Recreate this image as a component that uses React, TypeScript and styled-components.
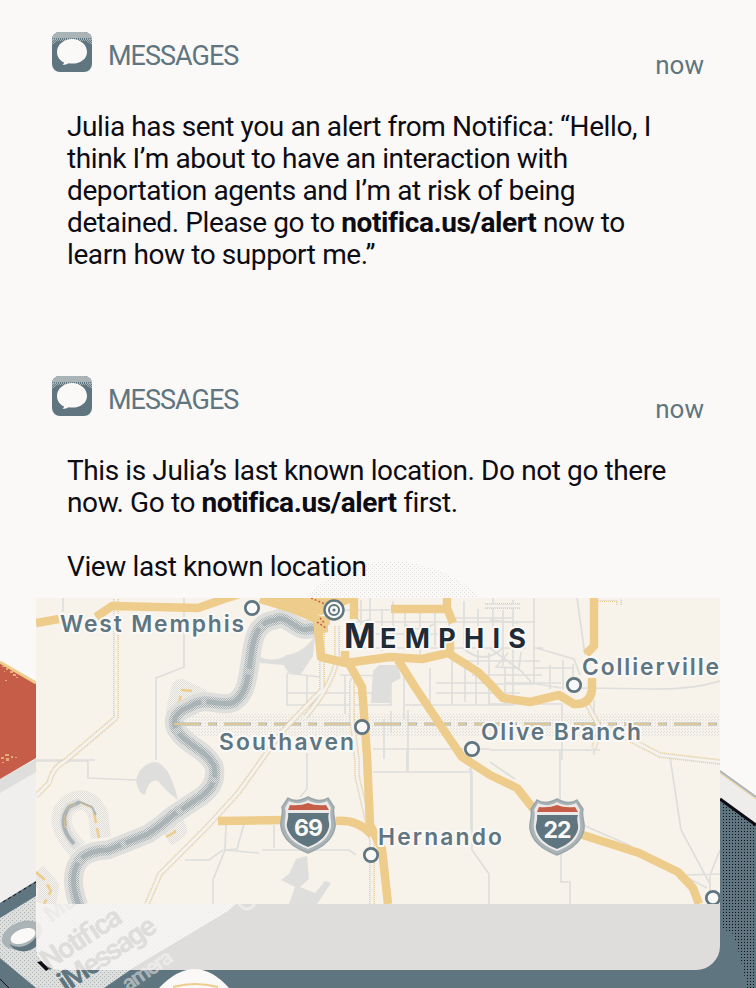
import React from 'react';
import styled, { createGlobalStyle } from 'styled-components';

const c = {
  paper: '#faf9f7', cream: '#f8f3ea', yellow: '#eecd8c', slate: '#5f7580',
  mist: '#aab4b7', light: '#dededc', red: '#c65d49', ink: '#0d0c14',
};

const Global = createGlobalStyle`
  * { box-sizing: border-box; }
  body { margin: 0; background: ${c.paper}; font-family: Roboto, "Liberation Sans", sans-serif; }
`;

const Page = styled.main`
  position: relative;
  width: 756px;
  height: 988px;
  overflow: hidden;
  background: ${c.paper};
`;

const Backdrop = styled.svg`
  position: absolute;
  inset: 0;
  display: block;
`;

const Stack = styled.div`
  position: relative;
  display: flex;
  flex-direction: column;
  gap: 32px;
  padding: 16px 36px 18px;
`;

const Card = styled.article<{ $height: number }>`
  display: flex;
  flex-direction: column;
  height: ${p => p.$height}px;
`;

const CardHeader = styled.header`
  display: flex;
  justify-content: space-between;
  height: 95px;
  padding: 16px 16px 0;
`;

const Source = styled.div`
  display: flex;
  gap: 16px;
  height: 40px;
`;

const AppIcon = styled.svg`
  width: 40px;
  height: 40px;
  border-radius: 8px;
`;

const AppName = styled.span`
  color: ${c.slate};
  font-size: 27px;
  line-height: 48px;
  letter-spacing: -0.98px;
`;

const Time = styled.time`
  margin-top: 17px;
  color: ${c.slate};
  font-size: 26px;
  line-height: 32px;
`;

const Message = styled.p`
  margin: 0;
  padding-left: 31px;
  color: ${c.ink};
  font-size: 28px;
  line-height: 32px;
`;

const Line = styled.span`
  display: block;
  min-height: 32px;
  white-space: nowrap;
  letter-spacing: -0.4px;
`;

const MapView = styled.svg`
  display: block;
  flex: none;
  width: 684px;
  height: 306px;
  margin-top: 15px;
`;

const CardFooter = styled.footer`
  flex: 1;
  border-radius: 0 0 24px 24px;
  background: rgba(250, 249, 247, 0.8);
  backdrop-filter: grayscale(1);
`;

const MapLabel = styled.text`
  fill: ${c.slate};
  stroke: ${c.paper};
  stroke-width: 4px;
  stroke-linejoin: round;
  paint-order: stroke;
  font-family: Inter, Roboto, sans-serif;
  font-size: 22.8px;
  font-weight: 600;
`;

const CityLabel = styled(MapLabel)<{ $size: number }>`
  fill: #202b36;
  font-size: ${p => p.$size}px;
  font-weight: 700;
`;

const ShieldNumber = styled.text`
  fill: ${c.paper};
  font-family: Inter, Roboto, sans-serif;
  font-size: 23px;
  font-weight: 700;
  letter-spacing: -1px;
  text-anchor: middle;
`;

const BackdropText = styled.text`
  font-family: Roboto, sans-serif;
  font-weight: 700;
`;

function PhoneLabels() {
  return (
    <g fill={c.slate}>
      <BackdropText fontSize="23" fill={c.mist} transform="translate(51 923) rotate(-36)">MES</BackdropText>
      <BackdropText fontSize="29" transform="translate(48 971) rotate(-33)" textLength="91">Notifica</BackdropText>
      <BackdropText fontSize="29" transform="translate(66 993) rotate(-34)" textLength="112">iMessage</BackdropText>
      <BackdropText fontSize="22" transform="translate(128 992) rotate(-34)" textLength="56" fill={c.mist}>amera</BackdropText>
    </g>
  );
}

function Background() {
  return (
    <Backdrop width="756" height="988" viewBox="0 0 756 988">
      <defs>
        <pattern id="shade" width="3" height="3" patternUnits="userSpaceOnUse">
          <rect width="3" height="3" fill={c.slate} /><rect width="1" height="1" fill={c.ink} />
        </pattern>
        <pattern id="paleDots" width="4" height="4" patternUnits="userSpaceOnUse">
          <rect width="1" height="1" fill={c.light} /><rect x="2" y="2" width="1" height="1" fill={c.light} />
        </pattern>
        <pattern id="phoneDots" width="4" height="4" patternUnits="userSpaceOnUse">
          <rect width="4" height="4" fill={c.light} /><rect width="1" height="1" fill={c.mist} /><rect x="2" y="2" width="1" height="1" fill={c.mist} />
        </pattern>
      </defs>
      <path d="M0 779L36 759V904L0 903Z" fill="#f0efed" />
      <path d="M0 779L36 759V772L0 793Z" fill={c.light} />
      <path d="M0 662L36 683V758L0 779Z" fill={c.red} />
      <path d="M0 662L36 683" stroke={c.yellow} strokeWidth="3" />
      <g fill={c.yellow} opacity=".7">
        <path d="M2 666h3v1h-3zM6 668h2v2h-2zM4 671h1v1h-1zM10 671h3v2h-3zM13 674h3v2h-3zM16 677h2v1h-2zM5 680h2v1h-2z" />
        <path d="M1 757h3v2h-3zM5 754h4v2h-4zM6 758h3v3h-3zM11 756h2v2h-2zM2 762h2v1h-2zM15 757h2v1h-2z" />
      </g>
      <path d="M110 900H756V988H60Z" fill={c.slate} />
      <path d="M0 903L36 881V900H240L228 911L136 966L104 988H0Z" fill="url(#phoneDots)" />
      <path d="M0 903L36 881V896L0 918Z" fill={c.slate} />
      <path d="M3 902L36 882" stroke={c.ink} strokeDasharray="3 3" />
      <path d="M0 958L36 988H0Z" fill={c.slate} />
      <path d="M0 979L9 988" stroke={c.ink} />
      <ellipse cx="22" cy="935" rx="21" ry="13" fill={c.mist} transform="rotate(-22 22 935)" />
      <path d="M9 944q15 9 28-8v10q-11 9-23 3z" fill={c.slate} />
      <ellipse cx="23" cy="936" rx="13" ry="7" fill={c.paper} transform="rotate(-22 23 936)" />
      <PhoneLabels />
      <path d="M37 962l5-1 7 8-3 2z" fill={c.ink} />
      <path d="M159 988Q195 950 229 988Z" fill={c.paper} />
      <path d="M173 987Q195 981 218 987" fill="none" stroke={c.yellow} strokeWidth="2" />
      <path d="M239 904Q247 914 255 904" fill="none" stroke={c.mist} strokeWidth="3" />
      <path d="M720 770L756 796V825L720 799Z" fill="#eeedeb" />
      <path d="M720 771L756 797" fill="none" stroke={c.mist} strokeWidth="2" />
      <path d="M720 773L756 799" stroke={c.yellow} strokeWidth="1" />
      <path d="M720 799L756 825V904H720Z" fill={c.slate} />
      <path d="M721 799L756 825V988H747Q739 949 733 934L721 928Z" fill="url(#shade)" />
      <path d="M720 799L756 825" stroke={c.ink} strokeWidth="3" />
      <path d="M304 598Q340 562 391 561Q443 562 484 600Z" fill="url(#paleDots)" />
    </Backdrop>
  );
}

function MessageIcon() {
  return (
    <AppIcon viewBox="0 0 40 40">
      <defs>
        <pattern id="gloss" width="2" height="2" patternUnits="userSpaceOnUse">
          <rect width="2" height="2" fill={c.mist} /><rect width="1" height="1" fill={c.slate} />
        </pattern>
        <pattern id="glossLow" width="2" height="2" patternUnits="userSpaceOnUse">
          <rect width="1" height="1" fill={c.mist} /><rect x="1" y="1" width="1" height="1" fill={c.mist} />
        </pattern>
      </defs>
      <rect width="40" height="40" fill={c.slate} />
      <path d="M0 0H40V13L34 9H6L0 13Z" fill="url(#glossLow)" />
      <path d="M0 0H40V8L34 7H6L0 8Z" fill="url(#gloss)" />
      <path d="M0 0H40V5H0Z" fill={c.mist} />
      <path d="M20 7C12 7 5 12.5 5 20c0 5 3 8.5 7 10.5 0 1.2-.8 2-1.6 2.5 2.8 0 4.6-.6 6-1.7 10.3 1.7 18.6-3.6 18.6-11.3C35 12.5 28 7 20 7Z" fill={c.paper} />
    </AppIcon>
  );
}

function Shield({ x, y, children }: { x: number; y: number; children: string }) {
  const shape = 'M7 1C13 5 20 4 27 0C34 4 41 5 47 1L53 10C51 16 55 23 54 30C52 42 43 50 27 56C11 50 2 42 0 30C-1 23 3 16 1 10Z';
  return (
    <g transform={`translate(${x} ${y})`}>
      <path d={shape} fill={c.mist} stroke="#98a5aa" strokeWidth="1.5" />
      <path d="M8 4C14 7 21 7 27 3C33 7 41 7 46 4L50 11C48 17 51 24 50 30C48 40 41 47 27 52C13 47 6 40 4 30C3 24 6 17 4 11Z" fill="#ebeae8" />
      <path d="M9 8Q20 9 27 6Q34 9 45 8L48 13H7Z" fill={c.red} />
      <path d="M7 16H48C46 21 49 26 48 30C46 38 40 45 27 50C14 45 8 38 6 30C5 26 8 21 7 16Z" fill={c.slate} />
      <ShieldNumber x="27" y="39">{children}</ShieldNumber>
    </g>
  );
}

function Town({ x, y }: { x: number; y: number }) {
  return <circle cx={x} cy={y} r="6.7" fill={c.paper} stroke={c.slate} strokeWidth="2.7" />;
}

function MinorRoads() {
  return (
    <g fill="none" stroke={c.light} strokeWidth="1.7">
      <path d="M63 598V612M184 598V618M184 632V667L156 678V759M36 761H88V778L136 780M156 750V760" />
      <path d="M287 674V705H391V665M286 693H391M307 675V705M287 673L320 677M340 675L391 676M404 668V720M430 668V707M452 650V705H513V665M404 705H513M436 683H490M465 663V702M476 668V705M489 653V705M505 668V705M436 693H520" />
      <path d="M361 600V625M370 598V650M382 609V651M393 601V635M405 613V650M420 612V655M435 610V646M449 608V654M464 601V646M478 609V665M493 598V648M503 610V666M513 600V665" />
      <path d="M336 610H390M348 622H535M356 634H450M360 648H526M450 618H512M452 661H540M472 675H542M350 613l11 9 10-3M404 624q14 10 30 0M463 648q20 18 40 0" />
      <path d="M534 598V684H490M536 648L574 659L580 675M534 668H574M550 665V689M563 660V690M573 664V681M577 598L585 655M490 648L521 671L532 683L561 688M508 653l-12 14 23 1 2-16M534 648H543M490 620l28 3M506 683H561" />
      <path d="M569 688Q620 688 650 689Q690 690 720 681M490 704H562V760M594 700V755M408 710V772M470 768V772H472V850L489 874V904M373 749H490M490 750H600" />
      <path d="M307 753V789L300 797M262 850H349L356 855M274 825V848M373 772H472M407 750V772M471 750V830M560 750V800M561 853V882H570V904" />
      <path d="M670 757L681 830L710 884M710 904V875L720 850M686 875L720 874M686 877L707 888M583 825L631 846" />
      <path d="M226 824L225 850L213 880V904M244 824L237 849L225 850L259 853M185 860H209L223 850M490 762L515 779" />
      <path d="M345 675V714M351 678V721M384 719V759M391 711V733M36 760H95" />
    </g>
  );
}

function LocationMap() {
  const river = 'M319 628L309 629C297 633 286 613 275 620C256 622 253 640 251 656C248 677 247 694 234 702C222 708 205 696 191 706C181 710 170 716 176 729C186 746 205 748 214 766Q218 784 202 796L173 815Q162 825 148 834L108 850Q88 850 79 861Q68 877 79 906';
  const secondary = 'M116 599V718L64 762Q53 767 49 783L36 796M322 622V690Q302 710 281 733L238 793L207 827L160 874L147 904M337 626V660Q330 689 305 717M352 681V720L357 760V776L372 840V904M485 606H520M594 599H619V605M585 700L600 728L594 748M610 729L660 755L720 762';
  return (
    <MapView viewBox="36 598 684 306">
      <defs>
        <pattern id="border" width="3" height="3" patternUnits="userSpaceOnUse">
          <rect width="1" height="1" fill={c.light} /><rect x="1" y="2" width="1" height="1" fill={c.light} />
        </pattern>
        <pattern id="water" width="2" height="2" patternUnits="userSpaceOnUse">
          <rect width="2" height="2" fill={c.light} /><rect width="1" height="1" fill={c.mist} /><rect x="1" y="1" width="1" height="1" fill={c.mist} />
        </pattern>
        <pattern id="shore" width="2" height="2" patternUnits="userSpaceOnUse">
          <rect width="1" height="1" fill={c.light} /><rect x="1" y="1" width="1" height="1" fill={c.light} />
        </pattern>
      </defs>
      <rect x="36" y="598" width="684" height="306" fill={c.cream} />
      <path d="M174 714H720V737H178Z" fill="url(#border)" />
      <MinorRoads />
      <path d="M373 671L379 665H398L401 678L390 684V703H371Z" fill={c.light} />
      <path d="M260 657Q274 663 287 655Q303 653 315 636L313 656L301 674Q287 676 284 665L260 663Z" fill={c.light} />
      <path d="M136 781Q139 765 154 762Q169 762 178 800Q166 791 158 781Q149 778 145 795Q139 795 136 781Z" fill={c.light} />
      <path d="M296 859L307 856L309 879L300 887L315 893L325 881L331 883L317 904H289L295 887L281 880L289 874Z" fill={c.light} />
      <g fill="none" strokeLinejoin="round">
        <path d="M78 850Q51 821 68 805Q87 792 98 814L101 838M170 813L177 830L166 837M36 872L49 887L46 904M175 715L181 689L203 699" stroke="url(#shore)" strokeWidth="20" />
        <path d="M77 847Q56 824 69 807L80 802" stroke={c.light} strokeWidth="9" />
        <path d="M74 844Q56 824 69 807L80 802" stroke={c.mist} strokeWidth="4" />
        <path d="M66 827L65 818L69 806L80 802L93 808L99 838M36 872L44 879L51 891L44 904M174 724L182 690L192 691M174 813L175 832L166 837" stroke={c.yellow} strokeWidth="2.5" strokeDasharray="12 5" />
        <path d="M66 826L65 818L69 806L80 802L92 807L96 815" stroke={c.mist} strokeWidth="1.8" />
        <path d={river} stroke={c.light} strokeWidth="19" />
        <path d={river} stroke="url(#water)" strokeWidth="11" />
        <path d={river} stroke={c.mist} strokeWidth="5" strokeDasharray="60 5 42 6" />
      </g>
      <path d="M174 724H720" stroke={c.mist} strokeWidth="3" strokeDasharray="27 7 9 7" />
      <path d="M174 724H720" stroke={c.yellow} strokeWidth="1.5" strokeDasharray="26 8 8 8" />
      <g fill="none">
        <path d={secondary} stroke={c.yellow} strokeWidth="6" strokeDasharray="1 1" />
        <path d={secondary} stroke={c.light} strokeWidth="4.2" />
        <path d={secondary} stroke={c.cream} strokeWidth="2.6" />
      </g>
      <g fill="none" stroke={c.yellow} strokeWidth="8.5" strokeLinejoin="round">
        <path d="M36 623L59 619M96 617L112 606L198 608L224 599L246 592M260 599L293 609L317 619L321 657L346 663L390 657L422 659L448 653L478 672L490 684L503 698L530 702L559 695L574 704Q590 705 592 690V678M586 654L594 646V598" />
        <path d="M347 660L362 687L367 756L370 825L382 849L388 904M398 660L415 687L443 729L462 757L490 775L517 788L540 817L583 835L639 853L678 872L693 888L699 904" />
        <path d="M218 821L282 820M336 821Q358 819 372 835M300 600L330 602M354 598V619M391 609H447V598M447 608L453 623M317 620L330 621M345 651V665M450 640V655" />
      </g>
      <path d="M260 598H350V603L322 615L290 611Z" fill={c.yellow} />
      <path d="M314 620H328V632L315 636Z" fill={c.yellow} />
      <path d="M311 598L325 604M317 622L326 628M320 618L325 624" fill="none" stroke={c.red} strokeWidth="1.5" strokeDasharray="2 2" />
      <Town x={252} y={608} />
      <circle cx="334" cy="610" r="9.5" fill={c.paper} stroke={c.slate} strokeWidth="2.4" />
      <circle cx="334" cy="610" r="5" fill="none" stroke={c.slate} strokeWidth="2" />
      <circle cx="334" cy="610" r="1.6" fill={c.slate} />
      <Town x={362} y={727} />
      <Town x={574} y={685} />
      <Town x={472} y={749} />
      <Town x={371} y={855} />
      <Town x={713} y={898} />
      <MapLabel x="60" y="632" textLength="184">West Memphis</MapLabel>
      <MapLabel x="582" y="675" textLength="137">Collierville</MapLabel>
      <MapLabel x="219" y="750" textLength="135">Southaven</MapLabel>
      <MapLabel x="481" y="740" textLength="160">Olive Branch</MapLabel>
      <MapLabel x="378" y="845" textLength="124">Hernando</MapLabel>
      <CityLabel $size={34} x="344" y="648">M</CityLabel>
      <CityLabel $size={27} x="380" y="648" textLength="146">EMPHIS</CityLabel>
      <Shield x={281} y={797}>69</Shield>
      <Shield x={530} y={799}>22</Shield>
    </MapView>
  );
}

function Header() {
  return (
    <CardHeader>
      <Source><MessageIcon /><AppName>MESSAGES</AppName></Source>
      <Time>now</Time>
    </CardHeader>
  );
}

export default function App() {
  return (
    <Page>
      <Global />
      <Background />
      <Stack>
        <Card $height={312}>
          <Header />
          <Message>
            <Line>Julia has sent you an alert from Notifica: “Hello, I</Line>
            <Line>think I’m about to have an interaction with</Line>
            <Line>deportation agents and I’m at risk of being</Line>
            <Line>detained. Please go to <b>notifica.us/alert</b> now to</Line>
            <Line>learn how to support me.”</Line>
          </Message>
        </Card>
        <Card $height={610}>
          <Header />
          <Message>
            <Line>This is Julia’s last known location. Do not go there</Line>
            <Line>now. Go to <b>notifica.us/alert</b> first.</Line>
            <Line />
            <Line>View last known location</Line>
          </Message>
          <LocationMap />
          <CardFooter />
        </Card>
      </Stack>
    </Page>
  );
}
